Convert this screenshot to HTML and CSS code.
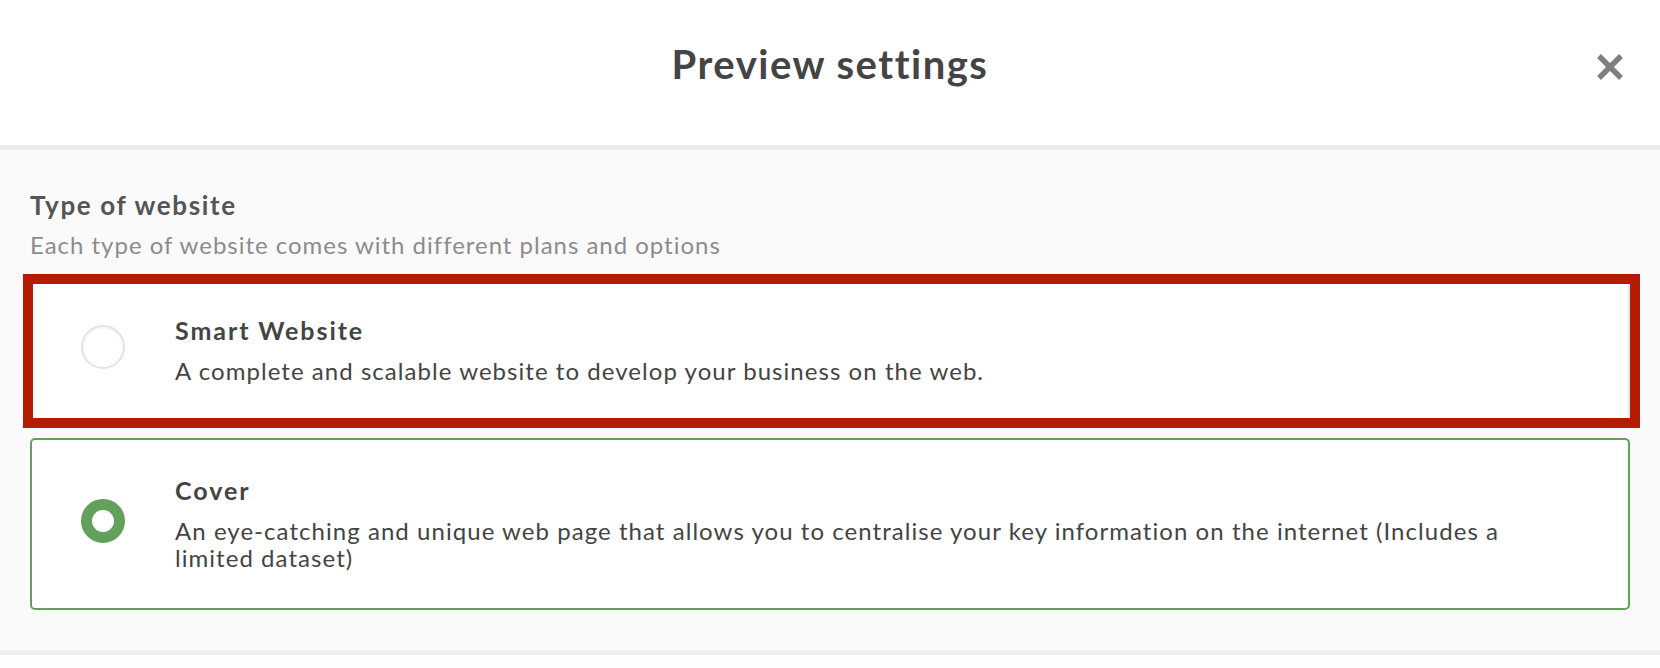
FILE: index.html
```html
<!DOCTYPE html>
<html lang="en">
<head>
<meta charset="utf-8">
<title>Preview settings</title>
<link rel="stylesheet" href="styles.css">
</head>
<body>
<div class="modal">
  <header class="modal-header">
    <div class="spacer"></div>
    <h1 class="modal-title">Preview settings</h1>
    <button class="close-btn" aria-label="Close">
      <svg width="28" height="28" viewBox="0 0 28 28"><path d="M3 3 L25 25 M25 3 L3 25" stroke="#7f7f7f" stroke-width="5.5" fill="none"/></svg>
    </button>
  </header>
  <section class="modal-body">
    <h2 class="field-label">Type of website</h2>
    <p class="field-help">Each type of website comes with different plans and options</p>
    <div class="options">
      <div class="option option-highlight">
        <span class="radio"></span>
        <div class="option-text">
          <div class="option-title">Smart Website</div>
          <div class="option-desc">A complete and scalable website to develop your business on the web.</div>
        </div>
      </div>
      <div class="option option-selected">
        <span class="radio radio-on"></span>
        <div class="option-text">
          <div class="option-title">Cover</div>
          <div class="option-desc">An eye-catching and unique web page that allows you to centralise your key information on the internet (Includes a limited dataset)</div>
        </div>
      </div>
    </div>
  </section>
  <footer class="modal-footer"></footer>
</div>
</body>
</html>
```

FILE: styles.css
```css
* { box-sizing: border-box; }
html, body { margin: 0; padding: 0; }
body {
  font-family: Lato, "Open Sans", sans-serif;
  color: #444;
  background: #fdfdfd;
}
.modal-header {
  height: 150px;
  background: #fff;
  border-bottom: 5px solid #ebebeb;
  display: grid;
  grid-template-columns: 1fr auto 1fr;
  align-items: start;
  padding-top: 40px;
}
.modal-title {
  margin: 0;
  font-size: 40px;
  line-height: 48px;
  font-weight: 700;
  color: #444;
  letter-spacing: 1.5px;
}
.close-btn {
  justify-self: end;
  margin-right: 36px;
  margin-top: 13px;
  background: none;
  border: 0;
  padding: 0;
  width: 28px;
  height: 28px;
  cursor: pointer;
}
.close-btn svg { display: block; }
.modal-body {
  background: #fafafa;
  padding: 39px 30px 40px 30px;
  border-bottom: 5px solid #efefef;
}
.field-label {
  margin: 0 0 9px 0;
  font-size: 26px;
  line-height: 32px;
  font-weight: 700;
  color: #555;
  letter-spacing: 1.65px;
}
.field-help {
  margin: 0 0 18px 0;
  font-size: 24px;
  line-height: 30px;
  color: #8c8c8c;
  letter-spacing: 0.98px;
}
.options {
  display: flex;
  flex-direction: column;
  gap: 15px;
}
.option {
  position: relative;
  display: flex;
  align-items: center;
  background: #fff;
  border: 2px solid #e6e6e6;
  border-radius: 5px;
  padding: 35px 90px 37px 49px;
}
.option-selected { border-color: #62a05b; }
.option-highlight::after {
  content: "";
  position: absolute;
  top: -6px;
  bottom: -7px;
  left: -9px;
  right: -12px;
  border: 10px solid #b51b00;
  pointer-events: none;
}
.radio {
  flex: none;
  width: 44px;
  height: 44px;
  border-radius: 50%;
  background: #fff;
  border: 2px solid #e3e3e3;
  box-shadow: inset 0 1px 3px rgba(0,0,0,0.06);
  margin-right: 50px;
  margin-bottom: 5px;
}
.radio-on {
  border: 11.5px solid #62a05b;
  box-shadow: none;
}
.option-text { flex: 1; }
.option-title {
  font-size: 25px;
  line-height: 30px;
  font-weight: 700;
  color: #444;
  margin-bottom: 12px;
  letter-spacing: 1.95px;
}
.option-desc {
  font-size: 24px;
  line-height: 27px;
  color: #444;
  letter-spacing: 1.05px;
}
.modal-footer {
  height: 20px;
  background: #fdfdfd;
}
```
